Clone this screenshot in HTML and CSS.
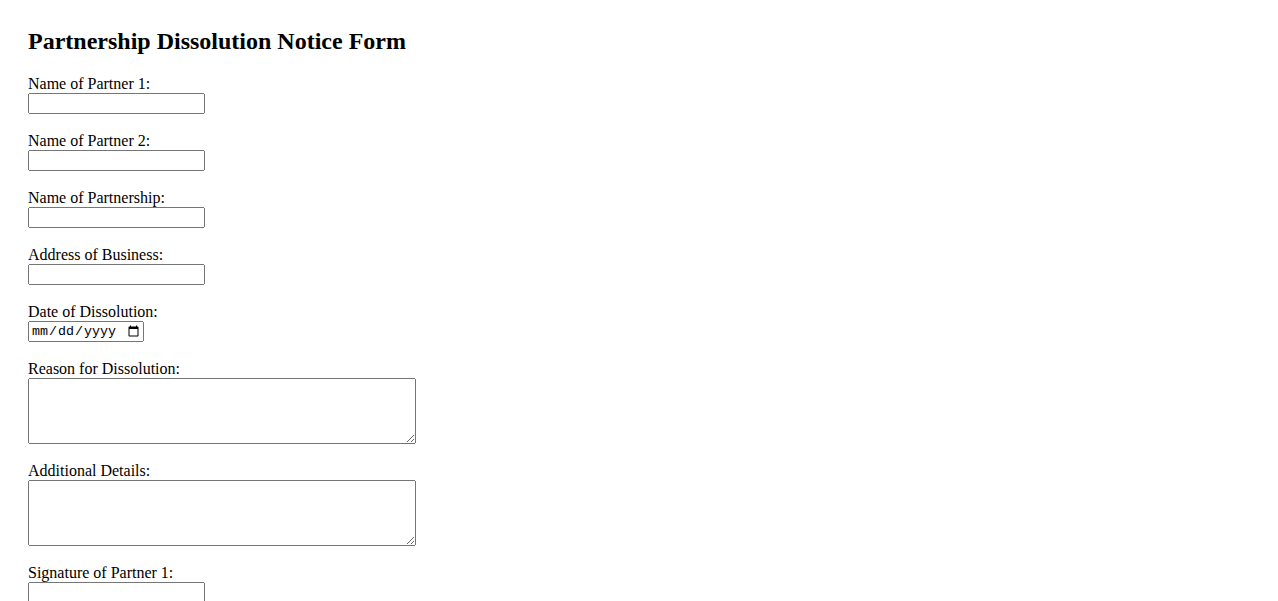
FILE: index.html
```html
<!DOCTYPE html>
<html lang="en">
<head>
<meta charset="utf-8">
<title>Partnership Dissolution Notice Form</title>
<link rel="stylesheet" href="styles.css">
</head>
<body>
<div class="page">
  <h2 class="title">Partnership Dissolution Notice Form</h2>
  <form class="form">
    <div class="field">
      <label class="label" for="p1">Name of Partner 1:</label>
      <input class="text" type="text" id="p1">
    </div>
    <div class="field">
      <label class="label" for="p2">Name of Partner 2:</label>
      <input class="text" type="text" id="p2">
    </div>
    <div class="field">
      <label class="label" for="pn">Name of Partnership:</label>
      <input class="text" type="text" id="pn">
    </div>
    <div class="field">
      <label class="label" for="addr">Address of Business:</label>
      <input class="text" type="text" id="addr">
    </div>
    <div class="field">
      <label class="label" for="date">Date of Dissolution:</label>
      <input class="date" type="date" id="date">
    </div>
    <div class="field">
      <label class="label" for="reason">Reason for Dissolution:</label>
      <textarea class="area" id="reason"></textarea>
    </div>
    <div class="field">
      <label class="label" for="details">Additional Details:</label>
      <textarea class="area" id="details"></textarea>
    </div>
    <div class="field">
      <label class="label" for="sig1">Signature of Partner 1:</label>
      <input class="text" type="text" id="sig1">
    </div>
    <div class="field">
      <label class="label" for="sig2">Signature of Partner 2:</label>
      <input class="text" type="text" id="sig2">
    </div>
  </form>
</div>
</body>
</html>
```
FILE: styles.css
```css
html, body {
  margin: 0;
  padding: 0;
  background: #ffffff;
  color: #000000;
  font-family: "Liberation Serif", "Times New Roman", serif;
  font-size: 16px;
}

.page {
  padding: 28px 28px 28px 28px;
}

.title {
  margin: 0 0 20px 0;
  font-size: 24px;
  font-weight: bold;
  line-height: 27px;
}

.form {
  display: flex;
  flex-direction: column;
  gap: 18px;
}

.field {
  display: flex;
  flex-direction: column;
  align-items: flex-start;
}

.label {
  display: block;
  line-height: 18px;
}

.text {
  box-sizing: border-box;
  width: 177px;
  height: 21px;
  margin: 0;
  font-family: "Liberation Sans", Arial, sans-serif;
  font-size: 13.333px;
}

.date {
  box-sizing: border-box;
  width: 116px;
  height: 21px;
  margin: 0;
  font-family: "Liberation Mono", monospace;
  font-size: 13.333px;
}

.area {
  box-sizing: border-box;
  width: 388px;
  height: 66px;
  margin: 0;
  font-family: "Liberation Mono", monospace;
  font-size: 13.333px;
}
```
